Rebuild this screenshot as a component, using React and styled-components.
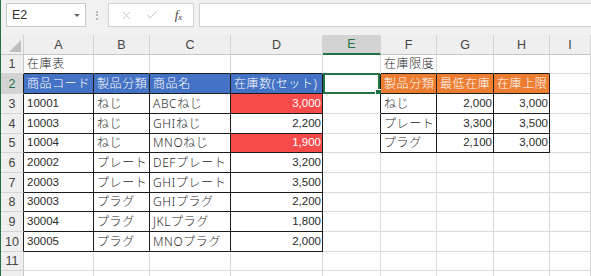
import React from 'react';
import styled, { createGlobalStyle } from 'styled-components';
import { X, Check } from 'lucide-react';

const GREEN = '#217346';
const GRID = '#dadada';
const INK = '#1c1c1c';

const FILLS = {
  blue: '#4472c4',
  orange: '#ed7d31',
  red: '#f74b4b',
};

const GlobalStyle = createGlobalStyle`
  html, body {
    margin: 0;
    padding: 0;
    background: #fff;
    overflow: hidden;
  }
`;

const Window = styled.div`
  width: 591px;
  height: 276px;
  box-sizing: border-box;
  overflow: hidden;
  border-left: 1px solid ${GREEN};
  background: #fff;
  font-family: "Noto Sans", "Noto Sans CJK JP", sans-serif;
`;

// formula bar
const TopBar = styled.div`
  height: 35px;
  box-sizing: border-box;
  padding: 3px 0 0 5px;
  display: flex;
  align-items: flex-start;
  background: #f1f1f1;
`;

const NameBox = styled.div`
  width: 80px;
  height: 24px;
  box-sizing: border-box;
  border: 1px solid #cacaca;
  background: #fff;
  display: flex;
  align-items: center;
  justify-content: space-between;
  padding: 0 5px 0 5px;
  font-family: "Liberation Sans", Arial, sans-serif;
  font-size: 12.5px;
  color: #333;
`;

const DropArrow = styled.span`
  width: 0;
  height: 0;
  border-left: 3px solid transparent;
  border-right: 3px solid transparent;
  border-top: 3px solid #666;
`;

const Grip = styled.div`
  width: 22px;
  height: 24px;
  display: flex;
  justify-content: center;
  align-items: center;
`;

const Dots = styled.span`
  height: 9px;
  border-left: 2px dotted #b8b8b8;
`;

const FxBox = styled.div`
  width: 86px;
  height: 24px;
  box-sizing: border-box;
  border: 1px solid #d2d2d2;
  background: #fff;
  display: flex;
  align-items: center;
  padding-left: 5px;
`;

const IconSlot = styled.span`
  width: 26px;
  display: flex;
  justify-content: center;
  align-items: center;
  color: #b4b4b4;
`;

const FxLabel = styled.span`
  width: 30px;
  text-align: center;
  font-family: "Liberation Serif", "Times New Roman", serif;
  font-style: italic;
  font-size: 13px;
  color: #444;
  sub {
    font-size: 9px;
    vertical-align: -1px;
  }
`;

const FormulaInput = styled.div`
  flex: 1;
  margin-left: 5px;
  height: 24px;
  box-sizing: border-box;
  border: 1px solid #d2d2d2;
  border-right: none;
  background: #fff;
`;

// sheet grid
const Sheet = styled.div`
  display: grid;
  grid-template-columns: 23px 70px 56px 81px 92px 58px 56px 57px 56px 1fr;
  grid-template-rows: ${p => p.$rows};
`;

const Corner = styled.div`
  box-sizing: border-box;
  background: #efefef;
  border-right: 1px solid #cfcfcf;
  border-bottom: 1px solid #c6c6c6;
  display: flex;
  align-items: flex-end;
  justify-content: flex-end;
  padding: 0 2px 2px 0;
`;

const CornerTriangle = styled.span`
  width: 0;
  height: 0;
  border-left: 12px solid transparent;
  border-bottom: 12px solid #bdbdbd;
`;

const ColHead = styled.div`
  box-sizing: border-box;
  background: ${p => (p.$active ? '#d3d3d3' : '#efefef')};
  border-right: 1px solid #d4d4d4;
  border-bottom: ${p => (p.$active ? `2px solid ${GREEN}` : '1px solid #c6c6c6')};
  display: flex;
  align-items: center;
  justify-content: center;
  font-family: "Liberation Sans", Arial, sans-serif;
  font-size: 12.5px;
  color: ${p => (p.$active ? GREEN : '#444')};
`;

const RowHead = styled.div`
  box-sizing: border-box;
  background: ${p => (p.$active ? '#d3d3d3' : '#efefef')};
  border-right: 1px solid ${p => (p.$edge ? INK : '#c8c8c8')};
  border-bottom: 1px solid #d4d4d4;
  display: flex;
  align-items: center;
  justify-content: center;
  font-family: "Liberation Sans", Arial, sans-serif;
  font-size: 12.5px;
  color: ${p => (p.$active ? GREEN : '#444')};
`;

const Cell = styled.div`
  position: relative;
  box-sizing: border-box;
  min-width: 0;
  border-right: 1px solid ${p => (p.$r ? INK : GRID)};
  border-bottom: 1px solid ${p => (p.$b ? INK : GRID)};
  background: ${p => (p.$fill ? FILLS[p.$fill] : '#fff')};
  color: ${p => (p.$fill ? '#fff' : '#2a2a2a')};
  display: flex;
  align-items: center;
  justify-content: ${p => (p.$num ? 'flex-end' : 'flex-start')};
  padding: ${p => (p.$num ? '0 1px 0 2px' : '0 2px 0 3px')};
  white-space: nowrap;
  font-family: ${p => (p.$latin
    ? '"Liberation Sans", Arial, sans-serif'
    : '"Noto Sans", "Noto Sans CJK JP", sans-serif')};
  font-size: ${p => (p.$latin ? '11.5px' : '12px')};
  font-weight: ${p => (p.$latin ? 400 : 300)};
  letter-spacing: ${p => (p.$latin ? '0' : '0.6px')};
  line-height: 1;
`;

const SelBox = styled.span`
  position: absolute;
  top: -1px;
  left: 0;
  right: 0;
  bottom: -1px;
  border: 2px solid ${GREEN};
  pointer-events: none;
`;

const Handle = styled.span`
  position: absolute;
  right: -4px;
  bottom: -4px;
  width: 5px;
  height: 5px;
  background: ${GREEN};
  border: 1px solid #fff;
`;

const COLS = ['A', 'B', 'C', 'D', 'E', 'F', 'G', 'H', 'I'];
const ROW_HEIGHTS = [19, 20, 20, 20, 19, 20, 20, 19, 20, 20, 19, 20];

const B = t => ({ t, fill: 'blue' });
const O = t => ({ t, fill: 'orange' });
const N = t => ({ t, num: true, latin: true });
const R = t => ({ t, num: true, latin: true, fill: 'red' });
const K = t => ({ t, latin: true });

const ROWS = [
  ['在庫表', '', '', '', '', '在庫限度'],
  [B('商品コード'), B('製品分類'), B('商品名'), B('在庫数(セット)'), '', O('製品分類'), O('最低在庫'), O('在庫上限')],
  [K('10001'), 'ねじ', 'ABCねじ', R('3,000'), '', 'ねじ', N('2,000'), N('3,000')],
  [K('10003'), 'ねじ', 'GHIねじ', N('2,200'), '', 'プレート', N('3,300'), N('3,500')],
  [K('10004'), 'ねじ', 'MNOねじ', R('1,900'), '', 'プラグ', N('2,100'), N('3,000')],
  [K('20002'), 'プレート', 'DEFプレート', N('3,200')],
  [K('20003'), 'プレート', 'GHIプレート', N('3,500')],
  [K('30003'), 'プラグ', 'GHIプラグ', N('2,200')],
  [K('30004'), 'プラグ', 'JKLプラグ', N('1,800')],
  [K('30005'), 'プラグ', 'MNOプラグ', N('2,000')],
  [],
  [],
];

// bordered tables (row numbers are 1-based, columns 0-based)
const BOXES = [
  { r0: 2, r1: 10, c0: 0, c1: 3 },
  { r0: 2, r1: 5, c0: 5, c1: 7 },
];

const ACTIVE = { row: 2, col: 4 };
const LAST_LABELLED_ROW = 11; // row 12 only peeks in at the bottom edge

const inBox = (r, c) => BOXES.some(b => r >= b.r0 && r <= b.r1 && c >= b.c0 && c <= b.c1);

const cellSpec = v => (typeof v === 'string' || v === undefined ? { t: v || '' } : v);

const App = () => {
  const rowTemplate = ['20px', ...ROW_HEIGHTS.map(h => `${h}px`)].join(' ');

  return (
    <>
      <GlobalStyle />
      <Window>
        <TopBar>
          <NameBox>
            <span>E2</span>
            <DropArrow />
          </NameBox>
          <Grip>
            <Dots />
          </Grip>
          <FxBox>
            <IconSlot><X size={13} strokeWidth={1.4} /></IconSlot>
            <IconSlot><Check size={14} strokeWidth={1.4} /></IconSlot>
            <FxLabel>f<sub>x</sub></FxLabel>
          </FxBox>
          <FormulaInput />
        </TopBar>

        <Sheet $rows={rowTemplate}>
          <Corner>
            <CornerTriangle />
          </Corner>
          {COLS.map((c, i) => (
            <ColHead key={c} $active={i === ACTIVE.col}>{c}</ColHead>
          ))}

          {ROWS.map((row, ri) => {
            const r = ri + 1;
            return (
              <React.Fragment key={r}>
                <RowHead $active={r === ACTIVE.row} $edge={inBox(r, 0)}>
                  {r <= LAST_LABELLED_ROW ? r : ''}
                </RowHead>
                {COLS.map((col, ci) => {
                  const s = cellSpec(row[ci]);
                  const selected = r === ACTIVE.row && ci === ACTIVE.col;
                  return (
                    <Cell
                      key={col}
                      $fill={s.fill}
                      $num={s.num}
                      $latin={s.latin}
                      $r={inBox(r, ci) || inBox(r, ci + 1)}
                      $b={inBox(r, ci) || inBox(r + 1, ci)}
                    >
                      {s.t}
                      {selected && (
                        <SelBox>
                          <Handle />
                        </SelBox>
                      )}
                    </Cell>
                  );
                })}
              </React.Fragment>
            );
          })}
        </Sheet>
      </Window>
    </>
  );
};

export default App;
